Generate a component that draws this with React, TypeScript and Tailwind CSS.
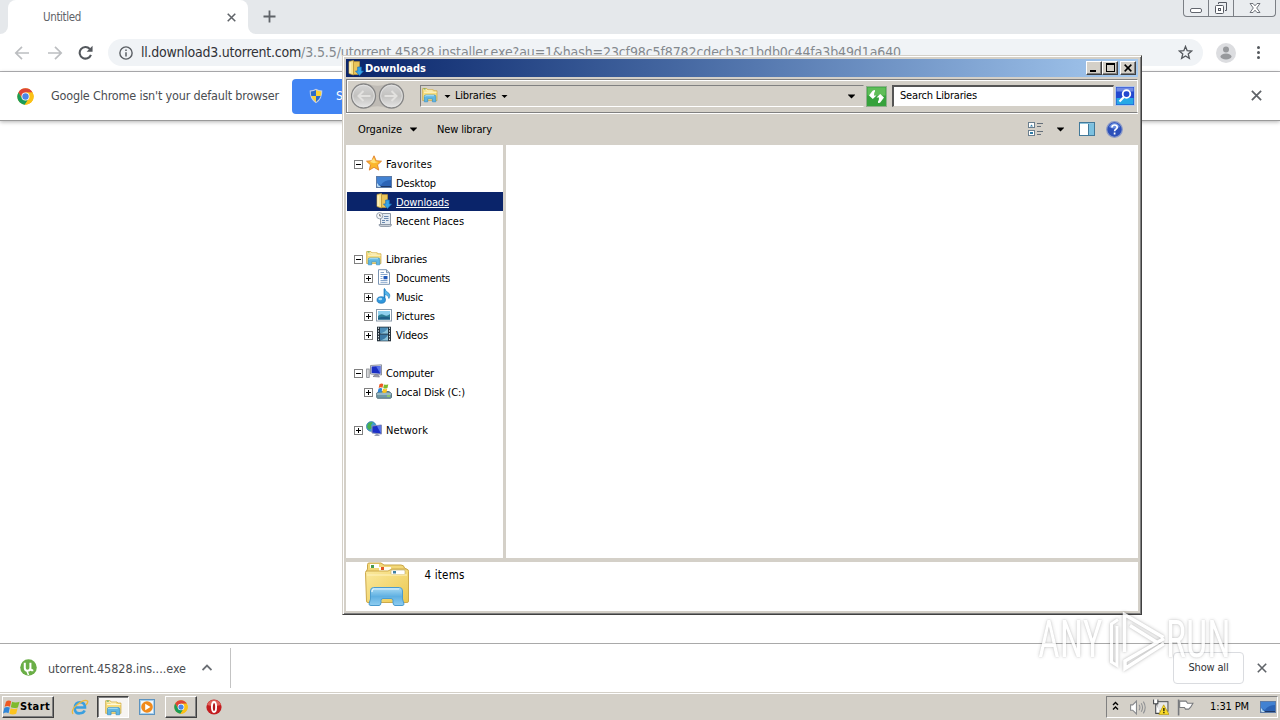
import { useLayoutEffect, useRef, useState, type ReactNode } from "react";

/** A single line of text whose tracking is tuned so that it spans `w` pixels. */
function Label({ w, className = "", children }: { w: number; className?: string; children: string }) {
  const ref = useRef<HTMLSpanElement>(null);
  const [spacing, setSpacing] = useState(0);
  useLayoutEffect(() => {
    if (ref.current) {
      const natural = ref.current.getBoundingClientRect().width;
      setSpacing((w - natural) / children.length);
    }
  }, [w, children]);
  return (
    <span ref={ref} className={`inline-block shrink-0 whitespace-pre ${className}`} style={{ letterSpacing: spacing }}>
      {children}
    </span>
  );
}

function Svg({ s = 16, vb = "0 0 16 16", className = "", children }: { s?: number; vb?: string; className?: string; children: ReactNode }) {
  return (
    <svg width={s} height={s} viewBox={vb} fill="none" className={`block shrink-0 ${className}`}>
      {children}
    </svg>
  );
}

function ChromeLogo({ s = 17 }: { s?: number }) {
  return (
    <Svg s={s} vb="0 0 24 24">
      <circle cx="12" cy="12" r="11.5" fill="#fbc116" />
      <path d="M2 6.2A11.5 11.5 0 0 1 22 6.4L12 6.6 7.2 14.6Z" fill="#dd4538" />
      <path d="M2 6.2A11.5 11.5 0 0 0 11 23.5L16.6 14.8 12 17.3 7.2 14.6Z" fill="#1a9c57" />
      <path d="M22 6.4H12l5 8-5.8 9.1A11.5 11.5 0 0 0 22 6.4Z" fill="#fbc116" />
      <circle cx="12" cy="12" r="5.7" fill="#fff" />
      <circle cx="12" cy="12" r="4.500" fill="#4a86e8" />
    </Svg>
  );
}

function LibrariesIcon({ s = 16 }: { s?: number }) {
  return (
    <Svg s={s}>
      <path d="M.6 13.500V1.600h4.300l1 1.200h5.400l.8 1h2.900v9.700z" fill="#f6dc7c" stroke="#cfa83f" strokeWidth=".7" />
      <path d="M1.200 2.700h3.200l1 1.200h5.200M2 5.200h12.600" stroke="#fffbe0" strokeWidth=".9" />
      <path d="M1.600 2h2" stroke="#41a24c" strokeWidth=".9" />
      <path d="M2.300 14.800v-5.200q0-1.600 1.500-1.600h8.500q1.500 0 1.500 1.600v5.200h-3.400v-3H5.700v3z" fill="#5fb6e2" stroke="#3a92c6" strokeWidth=".7" />
      <path d="M3 9.500q.2-.8 1-.8h8" stroke="#c8edfb" strokeWidth=".8" />
    </Svg>
  );
}

function BigLibraries() {
  return (
    <Svg s={48} vb="0 0 48 48">
      <defs>
        <linearGradient id="folder" x1="0" y1="0" x2="1" y2="1">
          <stop offset="0" stopColor="#fbeaa0" />
          <stop offset="1" stopColor="#ecc84f" />
        </linearGradient>
        <linearGradient id="stand" x1="0" y1="0" x2="0" y2="1">
          <stop offset="0" stopColor="#a9dbf4" />
          <stop offset=".5" stopColor="#5fb0e2" />
          <stop offset="1" stopColor="#8fcdf0" />
        </linearGradient>
      </defs>
      <path d="M4.500 9V4.500Q4.500 3 6 3H18l3 2H38q3 0 3.500 3L45 10V12H3Z" fill="#f3d878" stroke="#c9a648" />
      <rect x="7" y="4" width="9" height="4" fill="#fff" />
      <rect x="8" y="5" width="3" height="3" fill="#4c9b4c" />
      <rect x="16" y="7" width="12" height="4" fill="#fffdf0" />
      <rect x="18" y="7" width="3" height="3" fill="#e05522" />
      <path d="M2.500 12.500q0-1.500 1.500-1.500H25l4-2H43q2.500 0 2.500 2.500V41q0 1.500-1.500 1.500H5q-1.500 0-1.500-1.500Z" fill="url(#folder)" stroke="#cda94b" />
      <rect x="28" y="10" width="14" height="4.500" rx="1" fill="#fff" stroke="#bba76b" strokeWidth=".6" />
      <rect x="30" y="11" width="3" height="2.500" fill="#3e7fa5" />
      <path d="M4 15H44" stroke="#fff3c0" />
      <path d="M7.500 31q0-3.500 3-3.500h26q3 0 3 3.500v8l1.500 5q0 1.500-2 1.500H32q-2 0-2-3v-2q0-2-2-2H20q-2 0-2 2v2q0 3-2 3H8q-2 0-2-1.500L7.500 39Z" fill="url(#stand)" stroke="#4a9bcf" />
      <path d="M9 32q0-3 2-3H36" stroke="#e4f6ff" strokeWidth="1.200" />
    </Svg>
  );
}

function DownloadsIcon() {
  return (
    <Svg>
      <path d="M1 1.500 5.500.6V15L1 13.500Z" fill="#f8e48f" stroke="#c9a23a" strokeWidth=".7" />
      <path d="M5.500 1.600H11.500V14.500H5.500Z" fill="#e9c55a" stroke="#c29a35" strokeWidth=".7" />
      <path d="M2 2.500v10.500" stroke="#fffbe0" />
      <path d="M9.700 7h3.600v4h2.200L11.500 15.600 7.500 11h2.200Z" fill="#35a5e8" stroke="#1b6fb8" strokeWidth=".7" />
    </Svg>
  );
}

function DesktopIcon() {
  return (
    <Svg>
      <rect x=".5" y="2.500" width="15" height="11" fill="#2b63b5" stroke="#5d7ba6" />
      <path d="M1 3H15V6Q8 6 5 11L1 9Z" fill="#4282d2" />
      <path d="M1 12.500H15" stroke="#1d3766" />
      <path d="M1.500 9.500v3h3" fill="#8fc3ee" stroke="#c9e6fb" strokeWidth=".9" />
    </Svg>
  );
}

function StarIcon() {
  return (
    <Svg>
      <path d="M8 .8l2.200 4.900 5.300.5-4 3.600 1.200 5.300L8 12.300 3.300 15.100l1.200-5.300-4-3.600 5.300-.5z" fill="#fbb62b" stroke="#e0802a" strokeWidth=".9" />
      <path d="M8 3l1.300 3.500 3 .4L8 8.300 4 7z" fill="#ffe07a" />
    </Svg>
  );
}

function RecentIcon() {
  return (
    <Svg>
      <path d="M4.500 1.500H14.500v11H4.500Z" fill="#e4ebf2" stroke="#8d99a8" />
      <path d="M8 4.500h4.500M8 6.500h4.500M6 8.500h3m1 0h2.500M6 10.500h3" stroke="#6a89b0" />
      <path d="M3 12.500H15.500q0 2-2 2H5q-2 0-2-2Z" fill="#c8ced6" stroke="#8590a0" strokeWidth=".8" />
      <circle cx="3.700" cy="3.700" r="3.100" fill="#f5f7fa" stroke="#97a2b0" />
      <path d="M3.700 2v2h1.500" stroke="#555" strokeWidth=".8" />
    </Svg>
  );
}

function DocIcon() {
  return (
    <Svg>
      <path d="M2.500.7H10.500L13.500 3.700V15.300H2.500Z" fill="#fff" stroke="#7b95b3" />
      <path d="M10.500.7v3h3" fill="#cfdcea" stroke="#7b95b3" />
      <path d="M4.500 3.500H8M4.500 5.500h7M4.500 11.500h7M4.500 13.300h7M4.500 7.500h2M4.500 9.500h2" stroke="#86a6cc" />
      <rect x="7.500" y="7" width="4" height="3.300" fill="#1f58b8" />
    </Svg>
  );
}

function MusicIcon() {
  return (
    <Svg>
      <path d="M8.500 1v11" stroke="#1c83c8" strokeWidth="1.600" />
      <path d="M8.400.3q.6 2.400 3.500 4.200 3.200 1.900 1 6 .2-3.100-4.500-4.500Z" fill="#53b4ea" stroke="#2280c0" strokeWidth=".7" />
      <ellipse cx="5.200" cy="12" rx="4.200" ry="3.300" fill="#2e97dd" stroke="#1b6fb0" strokeWidth=".7" />
      <ellipse cx="4.300" cy="11" rx="1.900" ry="1.200" fill="#a5dcfa" />
    </Svg>
  );
}

function PicturesIcon() {
  return (
    <Svg>
      <rect x=".5" y="2.500" width="15" height="11.500" fill="#fff" stroke="#8a9aaa" />
      <rect x="2" y="4" width="12" height="8.500" fill="#8fd0ee" />
      <path d="M2 9q3-3 6-1t6-1v5.500H2Z" fill="#2f7f96" />
      <path d="M2 11q6-2 12-.5v2H2Z" fill="#205f88" />
    </Svg>
  );
}

function VideosIcon() {
  return (
    <Svg>
      <rect x="1" y=".7" width="14" height="14.600" fill="#26323c" />
      <rect x="4" y="1.500" width="8" height="6" fill="#4c8db8" />
      <rect x="4" y="8.500" width="8" height="6" fill="#3c79a5" />
      <path d="M4 7.500Q9 6.500 12 2v5.500ZM4 14.500Q9 13.500 12 9v5.500Z" fill="#8ac1d8" />
      <path d="M2.500 1.500V15M13.500 1.500V15" stroke="#dfe6ea" strokeDasharray="1.400 1.400" />
    </Svg>
  );
}

function ComputerIcon() {
  return (
    <Svg>
      <rect x=".6" y="5" width="2.600" height="8.500" fill="#d6d8da" stroke="#85898e" strokeWidth=".8" />
      <path d="M4.500 1.500 15.500.8V11L4.500 10Z" fill="#d9dbe2" stroke="#777d8e" strokeWidth=".8" />
      <path d="M5.600 2.500 14.400 1.900V9.800L5.600 9Z" fill="#1b2fc4" />
      <path d="M10 2.300 14.400 1.900V9.700Z" fill="#5a74ea" />
      <path d="M7 12.500 13.500 13 12 11H9Z" fill="#aab" stroke="#778" strokeWidth=".7" />
    </Svg>
  );
}

function WinFlag({ s = 16, className = "" }: { s?: number; className?: string }) {
  return (
    <Svg s={s} className={className}>
      <path d="M2.800 2.500Q5 .8 7.700 2L6.600 7.200Q4 5.900 1.500 7.400Z" fill="#ee5a24" />
      <path d="M8.500 2.500Q11.500 4 15.600 2.500L14 7.900Q10.500 9.200 7.300 7.800Z" fill="#7fba2c" />
      <path d="M1.300 8.200Q3.800 6.700 6.400 8.100L5.200 13.300Q2.800 12 0 13.600Z" fill="#2f86d8" />
      <path d="M7.200 8.700Q10.300 10 13.700 8.700L12.400 13.900Q9 15.200 6 13.800Z" fill="#fcc41e" />
    </Svg>
  );
}

function DiskIcon() {
  return (
    <Svg>
      <path d="M.7 10 4 8.500H13L15.500 10.500V14.500L14.500 15.300H1.500L.7 14.500Z" fill="#7199a6" stroke="#44606c" strokeWidth=".8" />
      <path d="M1 11H15.200" stroke="#c4dbe3" />
      <rect x="11" y="12.400" width="3" height="1.200" fill="#9be34c" />
      <path d="M3.500 1.200Q5.500.1 7.300 1L6.500 4.700Q4.500 3.800 2.700 5Z" fill="#ee5a24" />
      <path d="M8 1.400Q10 2.300 12.300 1.200L11.500 5Q9.300 6 7.200 5Z" fill="#7fba2c" />
      <path d="M2.500 5.700Q4.400 4.600 6.200 5.500L5.500 9.300Q3.600 8.400 1.600 9.500Z" fill="#2f86d8" />
      <path d="M7 5.800Q9 6.700 11.200 5.700L10.500 9.500Q8.400 10.400 6.200 9.500Z" fill="#fcc41e" />
    </Svg>
  );
}

function NetworkIcon() {
  return (
    <Svg>
      <circle cx="5.300" cy="5.500" r="4.900" fill="#3f9fd0" stroke="#2b6f9d" strokeWidth=".6" />
      <path d="M2 2.500q3-2 5-1L5 4 6 7 3 9 1 6Z" fill="#47b04b" />
      <path d="M6 5 15.500 4V13L6 12Z" fill="#1c30c8" stroke="#8890b5" />
      <path d="M11 5.200 15 4.600V12.500Z" fill="#5a76ec" />
      <path d="M8 15H14L12 13H10Z" fill="#9aa0b5" />
    </Svg>
  );
}

function Shield() {
  return (
    <Svg s={16}>
      <path d="M8 .8Q10.500 2.500 14.300 2.500 14.700 11 8 15.300 1.300 11 1.700 2.500 5.500 2.500 8 .8Z" fill="#c6d0e4" />
      <path d="M8 2Q6 3.300 2.800 3.500 2.700 6 3.300 8H8Z" fill="#2c6bc9" />
      <path d="M8 2Q10 3.300 13.200 3.500 13.300 6 12.700 8H8Z" fill="#fbd235" />
      <path d="M3.300 8H8V14Q4.500 11.500 3.300 8Z" fill="#fbd235" />
      <path d="M12.700 8H8V14Q11.500 11.500 12.700 8Z" fill="#2c6bc9" />
    </Svg>
  );
}

function Cross({ s = 11, w = 1.8, color = "#5f6368" }: { s?: number; w?: number; color?: string }) {
  return (
    <Svg s={s} vb="0 0 10 10">
      <path d="M.8.8 9.200 9.200M9.200.8.8 9.200" stroke={color} strokeWidth={w} />
    </Svg>
  );
}

function Caret({ small = false }: { small?: boolean }) {
  return (
    <Svg s={7} vb="0 0 7 7">
      <path d={small ? "M.500 2H6.500L3.500 5Z" : "M-.500 1.500H7.500L3.500 5.500Z"} fill="#000" />
    </Svg>
  );
}

function BrowserTop() {
  return (
    <header>
      <div className="flex h-[34px] items-start bg-[#e5e8eb]">
        <div className="flex h-[34px] w-2 items-end bg-white">
          <div className="h-[34px] w-2 rounded-br-lg bg-[#e5e8eb]" />
        </div>
        <div className="flex h-[34px] w-60 items-center rounded-t-lg bg-white pr-[12px] pl-[35px] text-[#5f6368]">
          <Label w={38} className="mt-px text-[11.500px]">Untitled</Label>
          <div className="grow" />
          <Cross s={9} w={1.7} />
        </div>
        <div className="h-[34px] w-2 bg-white">
          <div className="h-[34px] w-2 rounded-bl-lg bg-[#e5e8eb]" />
        </div>
        <Svg s={13} vb="0 0 13 13" className="mt-[10px] ml-[7px]">
          <path d="M6.500.5v12M.5 6.500h12" stroke="#5f6368" strokeWidth="1.800" />
        </Svg>
        <div className="grow" />
        <div className="mr-1 flex h-[17px] w-[93px] rounded-b-[4px] border border-t-0 border-[#7b7f85] bg-[#e9ecef]">
          <div className="flex w-[25px] items-end justify-center border-r border-[#7b7f85] pb-[3px]">
            <div className="h-[5px] w-3 rounded-[2px] border border-[#62666e] bg-white" />
          </div>
          <div className="flex w-[25px] items-center justify-center border-r border-[#7b7f85]">
            <Svg s={14} vb="0 0 14 14">
              <path d="M4.500 3V1.500h8v8H11" stroke="#555962" />
              <rect x="1.500" y="4.500" width="8" height="8" rx="1" fill="#fff" stroke="#555962" />
              <rect x="4.500" y="7.500" width="2" height="2" stroke="#555962" />
            </Svg>
          </div>
          <div className="flex grow items-center justify-center">
            <Svg s={12} vb="0 0 12 12">
              <path d="M1 1.500h3l2 2.300 2-2.300h3L7.700 6 11 10.500H8L6 8.200 4 10.500H1L4.300 6Z" fill="#fff" stroke="#62666e" strokeWidth=".9" />
            </Svg>
          </div>
        </div>
      </div>
      <div className="flex h-[38px] items-center border-b border-[#b3b3b6] bg-white pl-3.5">
        <div className="flex w-[94px] items-center gap-[17px]">
          <Svg s={16}>
            <path d="M15 8H2M8 1.800 1.800 8 8 14.200" stroke="#bcbec1" strokeWidth="1.700" />
          </Svg>
          <Svg s={16}>
            <path d="M1 8H14M8 1.800 14.200 8 8 14.200" stroke="#bcbec1" strokeWidth="1.700" />
          </Svg>
          <Svg s={15} className="-ml-0.5">
            <path d="M13.800 10.500A6.200 6.200 0 1 1 12.600 4.200" stroke="#54585d" strokeWidth="2.200" />
            <path d="M15.500.8V7.100H9.200Z" fill="#54585d" />
          </Svg>
        </div>
        <div className="flex h-[27px] w-[1095px] items-center rounded-full bg-[#f0f3f6] pr-2.5 pl-[11px] text-[14px]">
          <Svg s={14}>
            <circle cx="8" cy="8" r="7" stroke="#5a5e63" strokeWidth="1.600" />
            <path d="M8 7v5M8 4v1.800" stroke="#5a5e63" strokeWidth="1.700" />
          </Svg>
          <Label w={160} className="ml-2 text-[#303236]">ll.download3.utorrent.com</Label>
          <Label w={600} className="text-[#84898e]">/3.5.5/utorrent.45828.installer.exe?au=1&amp;hash=23cf98c5f8782cdecb3c1bdb0c44fa3b49d1a640</Label>
          <div className="grow" />
          <Svg s={15}>
            <path d="M8 1.500l1.800 4.500 4.800.4-3.700 3.100 1.200 4.700L8 11.700 3.900 14.200l1.200-4.700L1.400 6.400 6.200 6z" stroke="#54585d" strokeWidth="1.400" />
          </Svg>
        </div>
        <div className="ml-[13px]">
          <Svg s={20} vb="0 0 20 20">
            <circle cx="10" cy="10" r="10" fill="#dcdde0" />
            <circle cx="10" cy="6.500" r="3" fill="#97999c" />
            <ellipse cx="10" cy="13.500" rx="5.500" ry="3" fill="#97999c" />
          </Svg>
        </div>
        <Svg s={15} vb="0 0 15 15" className="ml-[15px]">
          <circle cx="7.500" cy="2.500" r="1.500" fill="#54585d" />
          <circle cx="7.500" cy="7.500" r="1.500" fill="#54585d" />
          <circle cx="7.500" cy="12.500" r="1.500" fill="#54585d" />
        </Svg>
      </div>
      <div className="flex h-[49px] items-center border-b border-[#9a9a9a] bg-white pr-[18px] pl-[17px] shadow-[0_1px_4px_rgba(0,0,0,0.3)]">
        <ChromeLogo s={17} />
        <Label w={228} className="ml-[17px] text-[12.500px] text-[#4a4d51]">Google Chrome isn't your default browser</Label>
        <div className="ml-[13px] flex h-[35px] w-[140px] items-center gap-3 rounded-[4px] bg-[#4184f3] pl-4 text-[12px] text-white">
          <Shield />
          <span>Set as default</span>
        </div>
        <div className="grow" />
        <div className="-mt-px"><Cross s={11} w={1.6} /></div>
      </div>
    </header>
  );
}

type Row = { name: string; w: number; icon: ReactNode; level: 0 | 1; box?: "+" | "-"; selected?: boolean; gap?: boolean };

const rows: Row[] = [
  { name: "Favorites", w: 46, icon: <StarIcon />, level: 0, box: "-" },
  { name: "Desktop", w: 40, icon: <DesktopIcon />, level: 1 },
  { name: "Downloads", w: 53, icon: <DownloadsIcon />, level: 1, selected: true },
  { name: "Recent Places", w: 68, icon: <RecentIcon />, level: 1, gap: true },
  { name: "Libraries", w: 41, icon: <LibrariesIcon />, level: 0, box: "-" },
  { name: "Documents", w: 54, icon: <DocIcon />, level: 1, box: "+" },
  { name: "Music", w: 27, icon: <MusicIcon />, level: 1, box: "+" },
  { name: "Pictures", w: 39, icon: <PicturesIcon />, level: 1, box: "+" },
  { name: "Videos", w: 32, icon: <VideosIcon />, level: 1, box: "+", gap: true },
  { name: "Computer", w: 48, icon: <ComputerIcon />, level: 0, box: "-" },
  { name: "Local Disk (C:)", w: 69, icon: <DiskIcon />, level: 1, box: "+", gap: true },
  { name: "Network", w: 42, icon: <NetworkIcon />, level: 0, box: "+" },
];

function TreeRow({ row }: { row: Row }) {
  return (
    <div className={`ml-px flex h-[19px] items-center ${row.level ? "pl-[17px]" : "pl-[7px]"} ${row.selected ? "bg-[#0a246a] text-white" : ""} ${row.gap ? "mb-[19px]" : ""}`}>
      <div className="w-3 shrink-0 pt-[2px]">
        {row.box && (
          <Svg s={9} vb="0 0 9 9">
            <rect x=".5" y=".5" width="8" height="8" fill="#fff" stroke="#808080" />
            <path d={row.box === "+" ? "M2 4.500h5M4.500 2v5" : "M2 4.500h5"} stroke="#000" />
          </Svg>
        )}
      </div>
      <div className="-mt-px">{row.icon}</div>
      <Label w={row.w} className={`mt-[3px] ml-1 ${row.selected ? "underline underline-offset-1" : ""}`}>{row.name}</Label>
    </div>
  );
}

const raised = "border border-t-white border-l-white border-r-[#404040] border-b-[#404040] bg-[#d4d0c8] shadow-[inset_-1px_-1px_0_#808080]";

function ExplorerWindow() {
  return (
    <section className="absolute top-[55px] left-[342px] flex h-[560px] w-[800px] flex-col border border-t-[#d4d0c8] border-r-[#404040] border-b-[#404040] border-l-[#d4d0c8] bg-[#d4d0c8] px-[3px] pt-[3px] pb-[3px] text-[11px] text-black shadow-[inset_1px_1px_0_#fff,inset_-1px_-1px_0_#808080]">
      <div className="flex h-[18px] shrink-0 items-center bg-linear-to-r from-[#0a246a] to-[#a6caf0] pr-0.5 pl-0.5">
        <DownloadsIcon />
        <Label w={61} className="mt-0.5 ml-px font-bold text-white">Downloads</Label>
        <div className="grow" />
        <div className={`flex h-3.5 w-4 items-end pb-[2px] pl-[3px] ${raised}`}>
          <div className="h-[2px] w-1.5 bg-black" />
        </div>
        <div className={`flex h-3.5 w-4 items-start justify-center pt-px ${raised}`}>
          <div className="h-[9px] w-[9px] border border-t-2 border-black" />
        </div>
        <div className={`ml-0.5 flex h-3.5 w-4 items-center justify-center ${raised}`}>
          <Cross s={8} w={1.900} color="#000" />
        </div>
      </div>
      <div className="mt-[2px] flex h-[34px] shrink-0 items-center border border-t-[#808080] border-r-white border-b-[#808080] border-l-[#808080] pl-1 shadow-[0_1px_0_#fff,inset_1px_1px_0_#fff]">
        <Svg s={55} vb="0 0 55 28" className="h-7">
          <defs>
            <linearGradient id="orb" x1="0" y1="0" x2="0" y2="1">
              <stop offset="0" stopColor="#d6d6d6" />
              <stop offset=".5" stopColor="#c2c1bf" />
              <stop offset="1" stopColor="#e6e6e6" />
            </linearGradient>
          </defs>
          <path d="M13 2H40V26H13Z" fill="#bfbbb5" />
          <path d="M16 1.500Q26.500 6 37 1.500ZM16 26.500Q26.500 22 37 26.500Z" fill="#d4d0c8" />
          <circle cx="12.500" cy="14" r="12" fill="url(#orb)" stroke="#858585" strokeWidth="1.300" />
          <circle cx="40.500" cy="14" r="12" fill="url(#orb)" stroke="#858585" strokeWidth="1.300" />
          <circle cx="12.500" cy="14" r="10.800" stroke="#e4e4e4" strokeWidth=".8" />
          <circle cx="40.500" cy="14" r="10.800" stroke="#e4e4e4" strokeWidth=".8" />
          <path d="M19.500 14H8M12.500 9 7.500 14l5 5" stroke="#e2e1df" strokeWidth="2" />
          <path d="M33.500 14H45M40.500 9 45.500 14l-5 5" stroke="#e2e1df" strokeWidth="2" />
        </Svg>
        <div className="ml-3.5 flex h-[22px] w-[444px] items-center border border-t-[#808080] border-r-[#d4d0c8] border-b-white border-l-[#808080] pr-2 pl-px">
          <div className="-mt-0.5"><LibrariesIcon /></div>
          <div className="ml-[6px]"><Caret small /></div>
          <Label w={41} className="ml-1">Libraries</Label>
          <div className="ml-[5px]"><Caret small /></div>
          <div className="grow" />
          <Caret />
        </div>
        <div className="ml-[2px]">
          <Svg s={21} vb="0 0 21 21">
            <rect x=".5" y=".5" width="20" height="20" fill="#36a23c" stroke="#8fae8c" />
            <rect x="1.500" y="1.500" width="18" height="8" fill="#5fbd58" />
            <path d="M3 9.500 6 5.500q.5-1.500 3-1.500V5.500Q8 6 8 9.500H10.500L6.800 13Z" fill="#fff" />
            <path d="M18 11.500 15 15.500q-.5 1.500-3 1.500V15.500Q13 15 13 11.500H10.500L14.200 8Z" fill="#fff" />
          </Svg>
        </div>
        <div className="ml-[5px] flex h-[22px] w-[222px] items-center border-t-2 border-r border-b border-l-2 border-t-[#555] border-r-[#d4d0c8] border-b-[#d4d0c8] border-l-[#555] bg-white pl-[6px]">
          <Label w={77}>Search Libraries</Label>
        </div>
        <div className="ml-px">
          <Svg s={20} vb="0 0 20 20">
            <rect x=".5" y=".5" width="19" height="19" fill="#2348cf" stroke="#b4c7e8" />
            <rect x="1.500" y="12" width="17" height="6.500" fill="#27a8e6" />
            <rect x="1.500" y="1.500" width="17" height="4" fill="#6f8ae4" />
            <circle cx="11.500" cy="8" r="3.800" stroke="#fff" strokeWidth="1.800" />
            <path d="M8.800 11 4.500 15.500" stroke="#fff" strokeWidth="2.200" />
          </Svg>
        </div>
      </div>
      <div className="flex h-8 shrink-0 items-center pl-3">
        <Label w={44} className="mt-[2px]">Organize</Label>
        <div className="ml-2"><Caret /></div>
        <Label w={55} className="mt-[2px] ml-5">New library</Label>
        <div className="grow" />
        <Svg s={16}>
          <rect x=".5" y="1.500" width="6" height="5" fill="#fff" stroke="#6b7f8e" />
          <rect x=".5" y="9.500" width="6" height="5" fill="#fff" stroke="#6b7f8e" />
          <path d="M2 5.500 3.500 3.500 5 5.500ZM2 11h3v2H2Z" fill="#2e7ba6" />
          <path d="M9 2.500h6M9 5.500h4M9 10.500h6M9 13.500h4" stroke="#66707a" />
        </Svg>
        <div className="ml-[13px]"><Caret /></div>
        <Svg s={16} className="ml-[15px]">
          <rect x=".5" y="1.500" width="15" height="13" fill="#fff" stroke="#42799a" />
          <path d="M1 2.500H15" stroke="#8ec3dd" />
          <rect x="10" y="3" width="5" height="11" fill="#7cc1e0" />
          <path d="M9.500 3v11" stroke="#42799a" />
        </Svg>
        <Svg s={17} vb="0 0 17 17" className="mr-[15px] ml-[11px]">
          <circle cx="8.500" cy="8.500" r="7.800" fill="#2c50ba" stroke="#8c9bc8" strokeWidth="1.200" />
          <path d="M3 6Q5 2 8.500 2T14 6Q8 9 3 6Z" fill="#6c8fe0" />
          <path d="M6 6.500Q6 4 8.600 4T11.200 6.300Q11.200 7.500 9.800 8.300 8.600 9 8.600 10.300M8.600 11.600v1.800" stroke="#fff" strokeWidth="1.700" />
        </Svg>
      </div>
      <div className="flex h-[413px] shrink-0">
        <nav className="w-[157px] shrink-0 bg-white pt-[9px]">
          {rows.map((row) => (
            <TreeRow key={row.name} row={row} />
          ))}
        </nav>
        <div className="ml-[3px] grow bg-white" />
      </div>
      <div className="mt-[4px] flex grow items-start bg-white pl-[17px]">
        <div className="-mt-0.5"><BigLibraries /></div>
        <Label w={40} className="mt-[5px] ml-[13.5px] text-[11.500px]">4 items</Label>
      </div>
    </section>
  );
}

function DownloadShelf() {
  return (
    <div className="flex h-[49px] shrink-0 items-center border-t border-[#a9a9a9] bg-white pr-[13px] pl-5 text-[12px] text-[#4a4d51]">
      <Svg s={17} className="-mt-0.5">
        <circle cx="8" cy="8" r="7.800" fill="#6aae46" />
        <path d="M4.500 3.500v5q0 2.500 2.500 2.500 2.800 0 2.800-2.500V3.500M9.800 8.500q0 2.500 2.700 2" stroke="#fff" strokeWidth="1.900" />
        <path d="M6.500 11 8 15" stroke="#fff" strokeWidth="1.400" />
      </Svg>
      <Label w={138} className="mt-[3px] ml-[11px] text-[12.500px]">utorrent.45828.ins....exe</Label>
      <Svg s={10} vb="0 0 10 10" className="ml-4">
        <path d="M.5 7 5 2.500l4.500 4.500" stroke="#6b6f74" strokeWidth="1.800" />
      </Svg>
      <div className="ml-[18px] h-10 w-px bg-[#c3c3c3]" />
      <div className="grow" />
      <div className="mr-[13px] flex h-8 w-[71px] items-center justify-center rounded-[4px] border border-[#dadce0] bg-white">
        <Label w={40} className="text-[11px] leading-[12px] text-[#303236]">Show all</Label>
      </div>
      <div className="-mt-px"><Cross s={10} w={1.600} /></div>
    </div>
  );
}

function Taskbar() {
  return (
    <footer className="flex h-[28px] shrink-0 items-center border-t border-[#d4d0c8] bg-[#d4d0c8] pr-0.5 pl-0.5 text-[11px] text-black shadow-[inset_0_1px_0_#fff]">
      <div className={`mt-px flex h-[22px] w-[52px] items-center ${raised}`}>
        <WinFlag s={17} />
        <Label w={30} className="mt-px text-[11px] font-bold">Start</Label>
      </div>
      <Svg s={18} vb="0 0 18 18" className="ml-[17px]">
        <path d="M3.500 9.500H14Q14 4.200 9 4.200T3.800 10 9 15.300q3.300 0 4.700-2.800" stroke="#3a9fdf" strokeWidth="2.600" />
        <path d="M2 16Q-.5 12 6.500 6.500T16.500 3Q17.500 4 15 7" stroke="#ecb93c" strokeWidth="1.300" />
      </Svg>
      <div className="mt-px ml-2 flex h-[22px] w-8 items-center justify-center border border-t-[#404040] border-r-white border-b-white border-l-[#404040] bg-[#f6f4f1] shadow-[inset_1px_1px_0_#808080]">
        <LibrariesIcon s={17} />
      </div>
      <Svg s={16} className="ml-2.5">
        <rect x=".5" y=".5" width="15" height="15" fill="#a8d0ee" stroke="#5c93c0" />
        <rect x="2" y="2" width="12" height="12" fill="#f2f7fb" />
        <circle cx="8" cy="8" r="5.800" fill="#f08a1c" />
        <path d="M6.200 4.800v6.400L11.500 8Z" fill="#fff" />
      </Svg>
      <div className={`mt-px ml-2.5 flex h-[22px] w-8 items-center justify-center ${raised}`}>
        <ChromeLogo s={14} />
      </div>
      <Svg s={16} className="ml-[9px]">
        <circle cx="8" cy="8" r="7.600" fill="#c31d20" />
        <path d="M1 6Q3 1 8 1t7 5Q8 8 1 6Z" fill="#e0625a" />
        <ellipse cx="8" cy="8" rx="2.100" ry="5" fill="#b01a1c" stroke="#fff" strokeWidth="1.900" />
      </Svg>
      <div className="grow" />
      <div className="mt-px flex h-[22px] w-[172px] items-center border border-t-[#808080] border-r-white border-b-white border-l-[#808080] pl-[5px]">
        <Svg s={7} vb="0 0 7 10" className="-mt-0.5 h-2.5">
          <path d="M1 4 3.500 1.500 6 4M1 8.500 3.500 6 6 8.500" stroke="#000" strokeWidth="1.400" />
        </Svg>
        <Svg s={17} className="ml-2.5">
          <path d="M1.500 5.500h2L7 2v12L3.500 10.500h-2Z" fill="#fff" stroke="#85878a" />
          <path d="M9.500 5.500Q11 8 9.500 10.500M11.500 4Q14 8 11.500 12M13.500 2.500Q17 8 13.500 13.500" stroke="#909295" />
        </Svg>
        <Svg s={17} className="ml-[6px]">
          <rect x="4.500" y="2.500" width="10.500" height="9" fill="#e9e9e9" stroke="#55585c" />
          <path d="M1.500.5v4h4v-4M3.500 4.500V13.500H8" fill="#fff" stroke="#44474b" />
          <path d="M11 5.500 16 14.500H6.500Z" fill="#fadb28" stroke="#b79a12" strokeWidth=".7" />
          <path d="M11.200 8.500v3M11.200 12.300v1.200" stroke="#000" strokeWidth="1.100" />
        </Svg>
        <Svg s={17} className="ml-[8px]">
          <path d="M1.500.5V15.500" stroke="#77797d" strokeWidth="1.500" />
          <path d="M2.500 2H8.500L10 4H15L13 7.500 11 9.500H8L7 8H2.500Z" fill="#fff" stroke="#77797d" />
        </Svg>
        <Label w={39} className="mt-px ml-[16px]">1:31 PM</Label>
        <div className="ml-[11px]"><DesktopIcon /></div>
      </div>
    </footer>
  );
}

function Watermark() {
  const glyphs = "absolute top-[13px] origin-left text-[51px] leading-[38px] text-white [text-shadow:0_0_2px_rgba(0,0,0,0.22),0_0_5px_rgba(0,0,0,0.2)] [font-family:Roboto,sans-serif]";
  return (
    <div className="pointer-events-none absolute top-[608px] left-[1036px] h-[68px] w-[200px] opacity-85">
      <span className={`${glyphs} left-[2px] scale-x-[0.74]`}>ANY</span>
      <svg width="60" height="68" viewBox="0 0 60 68" fill="none" className="absolute top-0 left-[72px] [filter:drop-shadow(0_0_1px_rgba(0,0,0,0.2))_drop-shadow(0_0_2px_rgba(0,0,0,0.2))]">
        <path d="M10 11.500 3.500 16V54L9 57.500V18" stroke="#fff" strokeWidth="3" />
        <path d="M16.500 44V6.500L55.500 29.500M22 17.500 50 35M56 30.500 17 53V60.500L56 35.500" stroke="#fff" strokeWidth="3.500" />
      </svg>
      <span className={`${glyphs} left-[130px] scale-x-[0.74]`}>RUN</span>
    </div>
  );
}

export default function App() {
  return (
    <div className="relative flex h-[720px] w-[1280px] flex-col overflow-hidden bg-white font-stretch-condensed [font-family:'DejaVu_Sans_Condensed','DejaVu_Sans',sans-serif]">
      <BrowserTop />
      <main className="grow" />
      <DownloadShelf />
      <Taskbar />
      <ExplorerWindow />
      <Watermark />
    </div>
  );
}
